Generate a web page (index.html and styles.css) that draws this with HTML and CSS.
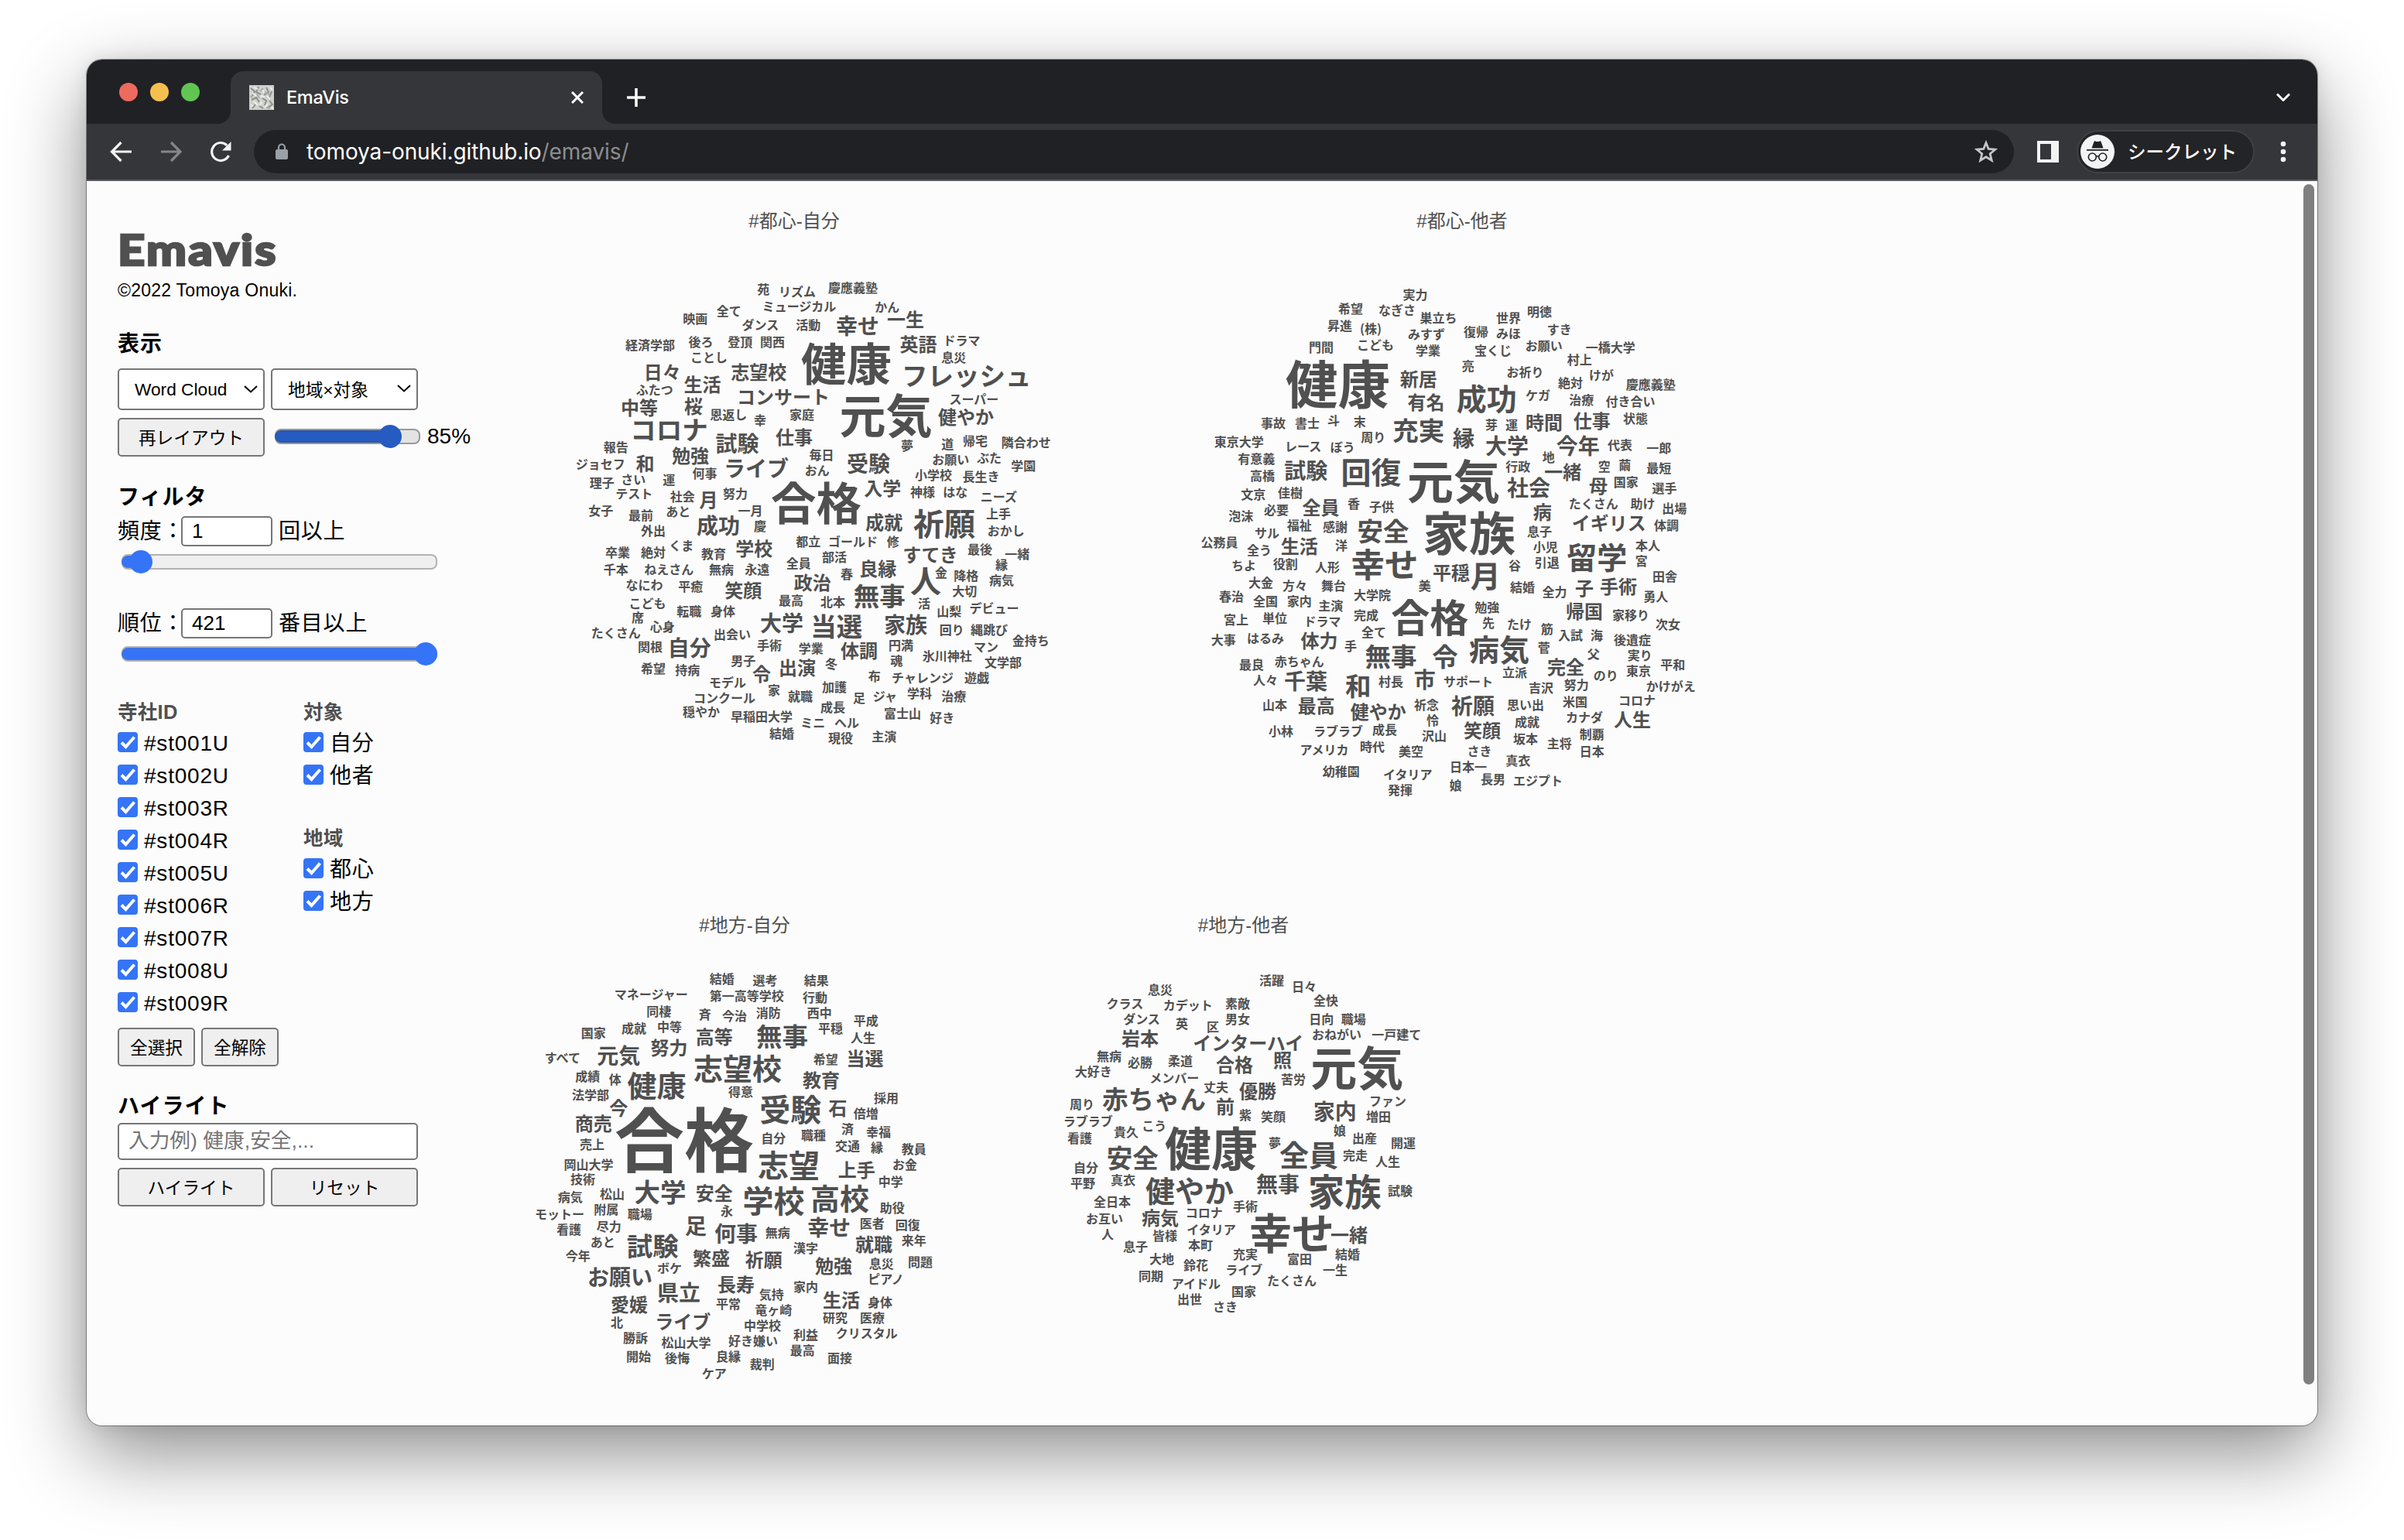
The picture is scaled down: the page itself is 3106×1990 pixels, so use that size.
FILE: index.html
```html
<!DOCTYPE html>
<html lang="ja">
<head>
<meta charset="utf-8">
<title>EmaVis</title>
<link rel="stylesheet" href="styles.css">
</head>
<body>
<div class="window">
  <div class="tabstrip">
    <div class="lights"><i class="red"></i><i class="yellow"></i><i class="green"></i></div>
    <div class="tab">
      <svg class="favicon" viewBox="0 0 32 32"><rect width="32" height="32" fill="#cfd1cd"/><g fill="none" stroke-width="2"><path stroke="#8d908c" d="M2 4l5 4-3 6M12 2l-3 7 6 3M22 3l3 6-6 4M29 8l-3 8M3 19l6-3 4 6M17 17l5 3-2 6M26 20l4 5-6 4M8 25l-4 5M13 27l5 3"/><path stroke="#eceeea" d="M6 3l5 2M17 5l2 5M27 3l3 3M4 10l5 4M14 14l6 1M23 14l4 4M6 21l5 5M16 21l-2 5M24 24l-4 5M29 28l2 3M2 26l3 1"/><path stroke="#a9aca8" d="M10 11l3 6M20 9l6 3M1 14l3 2M22 29l5 1M14 8l4-4"/></g></svg>
      <span class="tab-title">EmaVis</span>
      <svg class="close" viewBox="0 0 16 16"><path d="M1 1l14 14M15 1L1 15"/></svg>
    </div>
    <svg class="plus" viewBox="0 0 24 24"><path d="M12 0v24M0 12h24"/></svg>
    <svg class="tabsearch" viewBox="0 0 18 11"><path d="M1 1.5l8 8 8-8"/></svg>
  </div>
  <div class="toolbar">
    <svg class="nav" viewBox="0 0 28 28"><path d="M28 14H3M14.500 2L2.500 14l12 12"/></svg>
    <svg class="nav dim" viewBox="0 0 28 28"><path d="M1 14h24M14 2l12 12-12 12"/></svg>
    <svg class="nav" viewBox="0 0 28 28"><path d="M24.5 19a11.5 11.5 0 1 1-2.3-13.2"/><path class="solid" d="M27.500 1v11.500H16z"/></svg>
    <div class="omnibox">
      <svg class="lock" viewBox="0 0 16 22"><rect y="8" width="16" height="13" rx="2"/><path d="M4 9V5.500a4 4 0 0 1 8 0V9"/></svg>
      <span class="url">tomoya-onuki.github.io<span class="path">/emavis/</span></span>
      <svg class="star" viewBox="0 0 30 30"><path d="M15 3.500l3.200 8 8.600.700-6.600 5.600 2.100 8.400-7.300-4.500-7.300 4.500 2.100-8.400-6.600-5.600 8.600-.700z"/></svg>
    </div>
    <svg class="panel" viewBox="0 0 28 28"><path fill-rule="evenodd" d="M0 0h28v28H0zM4 4v20h14V4z"/></svg>
    <div class="profile">
      <svg class="avatar" viewBox="0 0 44 44"><circle cx="22" cy="22" r="22" fill="#f1f3f4"/><path fill="#202124" d="M14.500 17.500L17.500 9c.3-.8 1-1 1.700-.6 1.800.9 3.800.9 5.600 0 .7-.4 1.400-.2 1.700.6l3 8.500zM8 19h28v1.800H8z"/><g fill="none" stroke="#202124" stroke-width="1.600"><circle cx="15.300" cy="29" r="5"/><circle cx="28.700" cy="29" r="5"/><path d="M20 28.500q2-1.500 4 0"/></g></svg>
      <span>シークレット</span>
    </div>
    <svg class="menu" viewBox="0 0 8 28"><circle cx="4" cy="4" r="3.300"/><circle cx="4" cy="14" r="3.300"/><circle cx="4" cy="24" r="3.300"/></svg>
  </div>
  <div class="page">
    <aside class="sidebar">
      <h1>Emavis</h1>
      <p class="copyright">©2022 Tomoya Onuki.</p>

      <h2 class="h-view">表示</h2>
      <div class="row selects">
        <div class="select">Word Cloud<svg viewBox="0 0 18 10"><path d="M1 1l8 7.500L17 1"/></svg></div>
        <div class="select jp">地域×対象<svg viewBox="0 0 18 10"><path d="M1 1l8 7.500L17 1"/></svg></div>
      </div>
      <div class="row relayout">
        <div class="button wide">再レイアウト</div>
        <div class="slider active"><i class="fill"></i><i class="thumb"></i></div>
        <span>85%</span>
      </div>

      <h2 class="h-filter">フィルタ</h2>
      <div class="row field freq"><span class="name">頻度：</span><span class="num one">1</span><span class="unit">回以上</span></div>
      <div class="slider low"><i class="fill"></i><i class="thumb"></i></div>
      <div class="row field rank"><span class="name">順位：</span><span class="num">421</span><span class="unit">番目以上</span></div>
      <div class="slider full"><i class="fill"></i><i class="thumb"></i></div>

      <div class="checks">
        <div class="col">
          <h3>寺社ID</h3>
          <label><i class="box"><svg viewBox="0 0 26 26"><path d="M5 13.500l5.500 5.500L21.500 6.500"/></svg></i>#st001U</label>
          <label><i class="box"><svg viewBox="0 0 26 26"><path d="M5 13.500l5.500 5.500L21.500 6.500"/></svg></i>#st002U</label>
          <label><i class="box"><svg viewBox="0 0 26 26"><path d="M5 13.500l5.500 5.500L21.500 6.500"/></svg></i>#st003R</label>
          <label><i class="box"><svg viewBox="0 0 26 26"><path d="M5 13.500l5.500 5.500L21.500 6.500"/></svg></i>#st004R</label>
          <label><i class="box"><svg viewBox="0 0 26 26"><path d="M5 13.500l5.500 5.500L21.500 6.500"/></svg></i>#st005U</label>
          <label><i class="box"><svg viewBox="0 0 26 26"><path d="M5 13.500l5.500 5.500L21.500 6.500"/></svg></i>#st006R</label>
          <label><i class="box"><svg viewBox="0 0 26 26"><path d="M5 13.500l5.500 5.500L21.500 6.500"/></svg></i>#st007R</label>
          <label><i class="box"><svg viewBox="0 0 26 26"><path d="M5 13.500l5.500 5.500L21.500 6.500"/></svg></i>#st008U</label>
          <label><i class="box"><svg viewBox="0 0 26 26"><path d="M5 13.500l5.500 5.500L21.500 6.500"/></svg></i>#st009R</label>
        </div>
        <div class="col">
          <h3>対象</h3>
          <label><i class="box"><svg viewBox="0 0 26 26"><path d="M5 13.500l5.500 5.500L21.500 6.500"/></svg></i>自分</label>
          <label><i class="box"><svg viewBox="0 0 26 26"><path d="M5 13.500l5.500 5.500L21.500 6.500"/></svg></i>他者</label>
          <h3 class="area">地域</h3>
          <label><i class="box"><svg viewBox="0 0 26 26"><path d="M5 13.500l5.500 5.500L21.500 6.500"/></svg></i>都心</label>
          <label><i class="box"><svg viewBox="0 0 26 26"><path d="M5 13.500l5.500 5.500L21.500 6.500"/></svg></i>地方</label>
        </div>
      </div>
      <div class="row all"><div class="button small">全選択</div><div class="button small">全解除</div></div>

      <h2 class="h-highlight">ハイライト</h2>
      <div class="textbox">入力例) 健康,安全,...</div>
      <div class="row actions"><div class="button wide">ハイライト</div><div class="button wide">リセット</div></div>
    </aside>
    <main class="clouds">
      <div class="cloud-row first">
        <figure class="c1"><figcaption>#都心-自分</figcaption><svg id="urban-self" viewBox="650 302 752 740"></svg></figure>
        <figure class="c2"><figcaption>#都心-他者</figcaption><svg id="urban-other" viewBox="1402 302 974 740"></svg></figure>
      </div>
      <div class="cloud-row second">
        <figure class="c3"><figcaption>#地方-自分</figcaption><svg id="rural-self" viewBox="650 1213 624 600"></svg></figure>
        <figure class="c4"><figcaption>#地方-他者</figcaption><svg id="rural-other" viewBox="1274 1213 665 600"></svg></figure>
      </div>
    </main>
    <div class="scrollbar"><i></i></div>
  </div>
</div>
<script src="clouds.js"></script>
</body>
</html>
```
FILE: clouds.js
```js
// Each layer holds words placed on its own grid: an origin, the grid unit,
// and, per font size, "word,x,y" entries giving the centre of each word.
const layers = [
  { svg: 'urban-self', origin: [740, 350], unit: [630 / 1568, 1 / 3], words: {
    16: '苑,613,72 リズム,722,82 慶應義塾,901,66 全て,502,156 ミュージカル,728,138 かん,1011,142 映画,394,186 ダンス,603,209 活動,757,210 経済学部,249,287 後ろ,412,275 登頂,538,276 関西,642,276 ドラマ,1251,270 ことし,438,335 息災,1225,335 ふたつ,263,461 恩返し,501,557 幸,602,580 家庭,737,557 スーパー,1290,497 夢,1075,677 道,1205,671 帰宅,1294,661 隣合わせ,1458,666 報告,139,684 ジョセフ,89,749 何事,424,786 毎日,800,714 おん,786,773 お願い,1215,732 ぶた,1339,725 学園,1449,755 小学校,1160,792 長生き,1313,798 理子,94,821 さい,195,809 運,309,809 テスト,197,863 社会,353,876 努力,523,864 神様,1125,858 はな,1230,858 ニーズ,1370,875',
    24: '一生,1070,189 英語,1111,286 日々,288,392 志望校,598,394 生活,417,441 コンサート,677,488 中等,214,530 桜,388,525 健やか,1264,567 仕事,712,645 勉強,378,717 和,233,747 入学,996,843 月,437,889',
    28: '幸せ,916,213 試験,529,671 受験,951,748 ライブ,590,766',
    33.5: 'コロナ,310,615 フレッシュ,1266,405',
    58.5: '健康,880,360 合格,783,901',
    60: '元気,1007,562' } },
  { svg: 'urban-self', origin: [740, 650], unit: [630 / 1568, 1 / 3], words: {
    16: '女子,90,31 最前,219,48 あと,339,34 一月,571,31 上手,1369,43 外出,259,108 慶,602,90 おかし,1393,108 都立,757,150 ゴールド,901,150 修,1030,150 卒業,144,192 絶対,259,192 くま,349,166 教育,453,198 最後,1309,180 一緒,1429,198 全員,726,235 部活,841,210 春,881,275 縁,1379,240 千本,139,258 ねえさん,309,258 無病,478,258 永遠,593,258 金,1185,270 降格,1265,281 病気,1379,300 なにわ,230,318 平癒,379,324 大切,1260,342 こども,240,389 最高,702,378 北本,836,384 活,1130,390 転職,374,419 身体,483,420 山梨,1210,420 デビュー,1355,408 席,209,444 たくさん,139,503 心身,288,480 出会い,513,509 回り,1219,492 縄跳び,1339,492 金持ち,1473,534 関根,249,558 手術,632,552 学業,766,564 円満,1055,552 マン,1329,557 魂,1041,612 氷川神社,1204,594 文学部,1384,618 希望,259,642 持病,369,648 男子,548,612 冬,831,623 モデル,498,696 布,970,672 チャレンジ,1125,678 遊戯,1299,678 家,647,726 加護,841,714 コンクール,488,756 就職,732,750 足,921,756 ジャ,1004,750 学科,1115,738 治療,1225,750 穏やか,413,810 早稲田大学,607,828 成長,836,792 富士山,1060,816 好き,1188,833 ミニ,772,851 ヘル,881,852 結婚,672,894 現役,861,912 主演,1001,906',
    24: '成就,1001,75 学校,583,177 すてき,1150,201 良縁,981,255 政治,771,309 笑顔,548,339 体調,921,573 出演,722,640 令,607,662',
    28: '成功,468,88 大学,672,467 家族,1070,472 自分,375,562',
    33.5: '無事,986,362 当選,848,478',
    40: '祈願,1195,81 人,1135,304' } },

  { svg: 'urban-other', origin: [1560, 360], unit: [640 / 1568, 1 / 3], words: {
    16: '実力,658,63 希望,453,117 なぎさ,600,122 巣立ち,731,153 世界,953,153 明徳,1051,129 昇進,419,183 (株),517,194 みすず,693,216 復帰,850,206 みほ,953,212 すき,1114,199 門間,360,267 こども,532,259 学業,698,278 宝くじ,904,278 お願い,1065,260 一橋大学,1276,267 亮,825,340 村上,1178,315 お祈り,1006,362 絶対,1149,405 けが,1247,375 慶應義塾,1403,411 ケガ,1046,453 治療,1184,471 付き合い,1339,476 事故,208,561 書士,316,561 斗,399,550 末,482,555 芽,899,567 運,963,567 状態,1355,543 東京大学,100,633 周り,525,614 レース,303,651 ぼう,428,655 代表,1306,645 一郎,1429,657 有意義,155,699 地,1080,692 行政,983,729 空,1256,728 繭,1321,722 最短,1429,735 高橋,174,765 国家,1325,789 文京,145,837 佳樹,262,831 選手,1447,813 香,463,873 子供,551,885 必要,218,897 たくさん,1222,873 助け,1378,873 出場,1478,891 泡沫,106,921 福祉,291,957 感謝,404,963 息子,1051,981 体調,1453,957 サル,189,987',
    24: '新居,668,390 有名,692,479 時間,1066,557 仕事,1217,552 一緒,1125,749 母,1237,805 全員,359,889 病,1060,905 イギリス,1271,948',
    28: '縁,811,618 大学,948,648 今年,1173,648 試験,312,745 社会,1017,811',
    33.5: '充実,668,588 安全,556,978',
    39: '回復,518,752 成功,884,466',
    60: '元気,779,786 家族,828,987',
    67.5: '健康,413,409' } },
  { svg: 'urban-other', origin: [1560, 690], unit: [640 / 1568, 1 / 3], words: {
    16: '公務員,38,33 全う,164,63 洋,424,45 小児,1070,51 本人,1394,45 宮,1374,105 谷,973,122 引退,1075,111 ちよ,115,122 役割,247,117 人形,380,129 大金,169,189 方々,277,200 舞台,399,200 美,688,201 結婚,997,207 全力,1099,225 田舎,1448,165 春治,76,243 全国,184,261 家内,291,261 主演,390,279 大学院,522,238 勇人,1419,243 完成,502,315 勉強,885,285 家移り,1340,314 宮上,91,333 単位,213,327 ドラマ,364,339 先,889,345 たけ,987,350 筋,1075,369 入試,1149,393 海,1232,393 次女,1458,351 大事,51,411 はるみ,184,405 全て,527,381 手,453,435 菅,1065,441 後遺症,1345,411 父,1222,464 実り,1369,470 最良,140,506 赤ちゃん,291,495 平和,1473,507 東京,1365,531 のり,1261,549 立派,973,537 人々,184,567 村長,581,573 サポート,826,573 吉沢,1056,597 努力,1168,585 かけがえ,1467,591 山本,213,663 祈念,693,663 思い出,1007,663 米国,1164,651 コロナ,1360,645 怜,713,722 成就,1012,729 カナダ,1193,710 小林,233,765 ラブラブ,414,765 成長,561,759 沢山,718,783 坂本,1007,795 制覇,1217,777 主将,1114,813 アメリカ,370,836 時代,522,825 美空,644,843 さき,861,843 日本,1217,843 真衣,983,879 幼稚園,423,921 イタリア,634,932 日本一,826,903 長男,904,951 エジプト,1046,957 娘,786,975 発揮,610,993',
    24: '生活,291,48 平穏,772,149 子,1193,209 手術,1301,204 帰国,1193,301 体力,354,414 完全,1134,516 最高,345,665 健やか,541,691 笑顔,870,762 人生,1345,720',
    28: '市,688,566 千葉,311,572 祈願,840,668',
    33.5: '無事,581,474 令,752,474 和,477,588',
    39: '月,880,162 病気,924,447 留学,1233,92',
    43.5: '幸せ,561,120',
    50: '合格,704,325' } },

  { svg: 'rural-self', origin: [680, 1240], unit: [540 / 1568, 1 / 3], words: {
    16: '結婚,734,75 選考,896,81 結果,1088,81 マネージャー,468,134 第一高等学校,827,141 行動,1083,147 同棲,497,201 斉,670,213 今治,781,219 消防,908,207 西中,1100,207 国家,252,285 成就,404,267 中等,537,261 平穏,1141,267 平成,1274,237 人生,1263,303 すべて,136,381 希望,1123,387 成績,230,453 体,333,465 法学部,241,525 得意,804,513 採用,1350,537 倍増,1274,597 自分,927,692 職種,1077,681 済,1205,657 幸福,1321,669 売上,247,717 交通,1205,723 縁,1315,729 教員,1454,735 岡山大学,234,795 お金,1420,795 技術,212,853',
    24: '努力,536,342 高等,705,299 当選,1270,385 今,346,575 教育,1106,467 石,1169,576 商売,252,637 上手,1239,815',
    28: '元気,346,373',
    33.5: '無事,960,299',
    38: '志望校,793,423 健康,489,488',
    40: '受験,991,582 志望,984,797',
    90: '合格,592,699' } },
  { svg: 'rural-self', origin: [680, 1510], unit: [540 / 1568, 1 / 3], words: {
    16: '中学,1367,51 病気,165,111 松山,322,100 附属,300,159 モットー,125,177 職場,426,177 永,752,165 助役,1373,153 看護,160,237 尽力,310,225 無病,943,249 医者,1297,213 回復,1431,219 あと,287,285 漢字,1048,309 来年,1454,279 今年,194,339 ボケ,537,386 息災,1332,369 問題,1478,363 ピアノ,1349,428 家内,1048,459 気持,920,489 平常,758,525 竜ヶ崎,927,549 身体,1327,519 北,340,597 中学校,886,609 研究,1159,579 医療,1298,579 クリスタル,1277,638 勝訴,409,657 松山大学,600,675 好き嫌い,851,669 利益,1048,645 最高,1036,705 開始,421,729 後悔,566,735 良縁,758,729 裁判,885,759 面接,1176,735 ケア,705,795',
    24: '安全,705,96 就職,1304,294 繁盛,694,348 祈願,891,354 勉強,1153,377 長寿,787,450 愛媛,386,527 生活,1182,511 ライブ,587,594',
    28: '足,636,224 何事,787,252 幸せ,1136,229 お願い,351,421 県立,572,481',
    33.5: '大学,502,90 試験,474,300',
    38: '高校,1176,116',
    40: '学校,928,125' } },

  { svg: 'rural-other', origin: [1360, 1240], unit: [1 / 3, 1 / 3], words: {
    16: '活躍,849,81 日々,975,104 息災,417,117 クラス,280,170 カデット,524,177 素敵,717,171 全快,1059,159 ダンス,345,230 英,501,249 区,621,261 男女,717,231 日向,1042,231 職場,1166,231 おねがい,1101,291 一戸建て,1333,291 無病,219,375 必勝,339,399 柔道,495,393 大好き,158,435 メンバー,472,459 丈夫,633,495 苦労,933,465 周り,114,561 紫,747,603 笑顔,855,609 ファン,1299,549 増田,1263,609 ラブラブ,137,626 貴久,285,669 こう,394,645 看護,105,693 娘,1113,663 出産,1209,693 開運,1359,711 夢,861,710',
    24: '岩本,339,306 インターハイ,758,323 照,891,391 合格,705,408 優勝,795,510 前,669,570',
    28: '家内,1094,590',
    33.5: '赤ちゃん,393,540',
    60: '元気,1180,421' } },
  { svg: 'rural-other', origin: [1360, 1460], unit: [1 / 3, 1 / 3], words: {
    16: '自分,129,147 平野,117,207 真衣,273,195 完走,1173,99 人生,1299,123 試験,1347,237 全日本,231,279 コロナ,587,321 手術,747,297 お互い,201,345 人,213,405 皆様,435,411 イタリア,615,386 息子,321,453 本町,573,447 充実,747,483 富田,957,501 結婚,1143,483 大地,423,501 鈴花,555,525 ライブ,742,543 一生,1095,543 同期,381,567 たくさん,927,585 アイドル,556,597 国家,741,627 出世,531,657 さき,669,687',
    24: '病気,417,342 一緒,1149,408',
    28: '無事,873,211',
    33.5: '安全,310,108',
    38: '全員,993,98 健やか,531,236',
    47.5: '家族,1132,241',
    55: '幸せ,927,400',
    60: '健康,615,72' } }
];

const NS = 'http://www.w3.org/2000/svg';
for (const layer of layers) {
  const svg = document.getElementById(layer.svg);
  for (const [size, list] of Object.entries(layer.words)) {
    const group = document.createElementNS(NS, 'g');
    group.setAttribute('font-size', size);
    for (const entry of list.split(' ')) {
      const [word, x, y] = entry.split(',');
      const text = document.createElementNS(NS, 'text');
      text.textContent = word;
      text.setAttribute('x', (layer.origin[0] + x * layer.unit[0]).toFixed(1));
      text.setAttribute('y', (layer.origin[1] + y * layer.unit[1] + size * 0.375).toFixed(1));
      group.appendChild(text);
    }
    svg.appendChild(group);
  }
}
```
FILE: styles.css
```css
* { box-sizing: border-box; }
body {
  margin: 0;
  width: 3106px;
  height: 1990px;
  overflow: hidden;
  background: #fff;
  font-family: "Liberation Sans", "Noto Sans CJK JP", sans-serif;
}
i { display: block; font-style: normal; }
h1, h2, h3, p, figure { margin: 0; }
svg { display: block; flex: none; }

.window {
  margin: 77px 0 0 112px;
  width: 2882px;
  height: 1765px;
  border-radius: 20px;
  overflow: hidden;
  background: #fcfcfc;
  box-shadow: 0 0 0 1px rgba(0, 0, 0, .35), 0 36px 100px rgba(0, 0, 0, .45), 0 0 24px rgba(0, 0, 0, .1);
}

/* tab strip */
.tabstrip {
  height: 83px;
  background: #202124;
  display: flex;
  align-items: center;
  padding-right: 35px;
}
.lights { display: flex; gap: 16px; padding-left: 42px; width: 186px; }
.lights i { width: 24px; height: 24px; border-radius: 50%; }
.red { background: #ed6a5e; }
.yellow { background: #f5bf4f; }
.green { background: #61c554; }
.tab {
  position: relative;
  align-self: flex-end;
  width: 480px;
  height: 68px;
  padding: 0 24px;
  border-radius: 16px 16px 0 0;
  background: #35363a;
  display: flex;
  align-items: center;
  color: #fff;
}
.tab::before, .tab::after {
  content: "";
  position: absolute;
  bottom: 0;
  width: 16px;
  height: 16px;
}
.tab::before { left: -16px; background: radial-gradient(circle at 0 0, transparent 15.500px, #35363a 16px); }
.tab::after { right: -16px; background: radial-gradient(circle at 100% 0, transparent 15.500px, #35363a 16px); }
.favicon { width: 32px; height: 32px; }
.tab-title { margin: -2px 0 0 16px; flex: 1; font: 500 23.500px Inter, sans-serif; letter-spacing: -.3px; }
.close { width: 16px; height: 16px; fill: none; stroke: #fff; stroke-width: 3; }
.plus { width: 24px; height: 24px; margin: 14px 0 0 32px; stroke: #fff; stroke-width: 3.500; }
.tabsearch { width: 18px; height: 11px; margin: 14px 0 0 auto; fill: none; stroke: #fff; stroke-width: 3; }

/* toolbar */
.toolbar {
  height: 74px;
  padding: 0 40px 0 30px;
  border-bottom: 2px solid #5c5d60;
  background: #35363a;
  display: flex;
  align-items: center;
}
.nav { width: 28px; height: 28px; margin-right: 37px; fill: none; stroke: #f1f3f4; stroke-width: 3.200; }
.nav:nth-child(2) { margin-right: 36px; }
.nav .solid { fill: #f1f3f4; stroke: none; }
.dim { stroke: #85868a; }
.omnibox {
  width: 2274px;
  height: 56px;
  margin-left: -8px;
  padding: 0 21px 0 28px;
  border-radius: 28px;
  background: #202124;
  display: flex;
  align-items: center;
}
.lock { width: 16px; height: 22px; fill: #9aa0a6; }
.lock path { fill: none; stroke: #9aa0a6; stroke-width: 2.200; }
.url { margin-left: 24px; flex: 1; font: 400 28px Inter, sans-serif; letter-spacing: -.1px; color: #fff; }
.path { color: #8c8e91; }
.star { width: 30px; height: 30px; fill: none; stroke: #c4c6c8; stroke-width: 2.800; }
.panel { width: 28px; height: 28px; margin-left: 30px; fill: #f1f3f4; }
.profile {
  width: 230px;
  height: 56px;
  margin-left: 23px;
  padding-left: 3px;
  border: 2px solid #3f4043;
  border-radius: 28px;
  background: #232427;
  display: flex;
  align-items: center;
  color: #fff;
  font: 500 23.500px/1 "Noto Sans CJK JP", sans-serif;
}
.profile span { margin-left: 17px; }
.avatar { width: 44px; height: 44px; }
.menu { width: 8px; height: 28px; margin-left: 33px; fill: #f1f3f4; }

/* page */
.page { display: flex; height: 1608px; }
.sidebar {
  width: 538px;
  padding: 56px 0 0 40px;
  color: #000;
  font-size: 28px;
  letter-spacing: .8px;
}
h1 {
  width: max-content;
  height: 64px;
  font: 900 56px/64px Lato, sans-serif;
  letter-spacing: 2px;
  color: #505050;
  -webkit-text-stroke: 2.500px #505050;
  transform: scaleX(1.1);
  transform-origin: 0 0;
}
.copyright { margin-top: 6px; height: 30px; font-size: 23px; line-height: 30px; letter-spacing: .25px; }
h2 { height: 40px; font-size: 28px; line-height: 40px; letter-spacing: 1px; }
.h-view { margin-top: 35px; }
.h-filter { margin-top: 33px; }
.h-highlight { margin-top: 32px; }
.row { display: flex; align-items: center; }
.selects { margin-top: 11px; gap: 8px; }
.select, .button {
  border: 2px solid #767676;
  border-radius: 5px;
  display: flex;
  align-items: center;
  font-size: 22.700px;
  letter-spacing: 0;
}
.select { width: 190px; height: 54px; padding: 0 7px 0 20px; background: #fff; justify-content: space-between; }
.select.jp { padding-bottom: 2px; }
.select svg { width: 18px; height: 10px; fill: none; stroke: #000; stroke-width: 2; }
.button { justify-content: center; height: 50px; padding-bottom: 2px; background: #efefef; }
.wide { width: 190px; }
.small { width: 100px; }
.relayout { margin-top: 10px; }
.relayout span { margin: -3px 0 0 9px; letter-spacing: 0; }

.slider { position: relative; height: 30px; display: flex; align-items: center; margin-left: 5px; width: 408px; }
.slider::before { content: ""; flex: 1; height: 16px; border: 2px solid #b2b2b2; border-radius: 8px; background: #efefef; }
.slider .fill { position: absolute; left: 0; top: 7px; height: 16px; border-radius: 8px; background: #3574f6; border: 1px solid #4a78cf; }
.slider .thumb { position: absolute; top: 0; width: 30px; height: 30px; border-radius: 50%; background: #3574f6; }
.slider.active { width: 188px; margin: -2px 0 0 13px; }
.active::before { background: #e3e3e3; border-color: #999; }
.active .fill { width: 150px; background: #265bc2; border-color: #2a4f95; }
.active .thumb { left: 134px; background: #265bc2; }
.low, .full { margin-top: 5px; }
.low .fill { width: 28px; }
.low .thumb { left: 10px; }
.full .fill { width: 400px; }
.full .thumb { left: 378px; }

.field { height: 39px; }
.freq { margin-top: 4px; }
.rank { margin-top: 45px; }
.name { width: 82px; white-space: nowrap; }
.name, .unit { margin-top: -5px; }
.num {
  width: 118px;
  height: 39px;
  margin-right: 8px;
  padding-left: 12px;
  border: 2px solid #767676;
  border-radius: 5px;
  background: #fff;
  font-size: 26px;
  line-height: 35px;
  letter-spacing: 0;
}

.checks { display: flex; margin-top: 43px; }
.col { width: 240px; }
h3 { height: 35px; font-size: 25.500px; line-height: 35px; letter-spacing: .3px; color: #505050; }
.area { margin-top: 44px; }
label { display: flex; align-items: center; height: 42px; letter-spacing: .8px; line-height: 42px; padding-top: 4px; }
.box { width: 26px; height: 26px; margin: -4px 8px 0 0; border-radius: 4px; background: #3574f6; }
.box svg { width: 26px; height: 26px; fill: none; stroke: #fff; stroke-width: 4; }
.all { margin-top: 12px; gap: 8px; }
.textbox {
  margin-top: 1px;
  width: 388px;
  height: 48px;
  padding-left: 12px;
  border: 2px solid #767676;
  border-radius: 5px;
  background: #fff;
  color: #757575;
  font-size: 26.700px;
  line-height: 43px;
  letter-spacing: 0;
}
.actions { margin-top: 10px; gap: 8px; }

/* word clouds */
.clouds { flex: 1; padding-top: 36px; }
.cloud-row { display: flex; }
.first { height: 910px; }
figcaption { height: 32px; text-align: center; font-size: 24px; line-height: 32px; color: #505050; }
.c1 { width: 752px; }
.c2 { width: 974px; }
.c3 { width: 624px; }
.c4 { width: 665px; }
.first svg { height: 740px; width: 100%; }
.second svg { height: 600px; width: 100%; margin-top: 1px; }
text { fill: #505050; font-family: "Noto Sans CJK JP", sans-serif; font-weight: 700; text-anchor: middle; }

.scrollbar { width: 18px; padding-top: 4px; }
.scrollbar i { width: 14px; height: 1551px; border-radius: 7px; background: #7f7f7f; }
```
